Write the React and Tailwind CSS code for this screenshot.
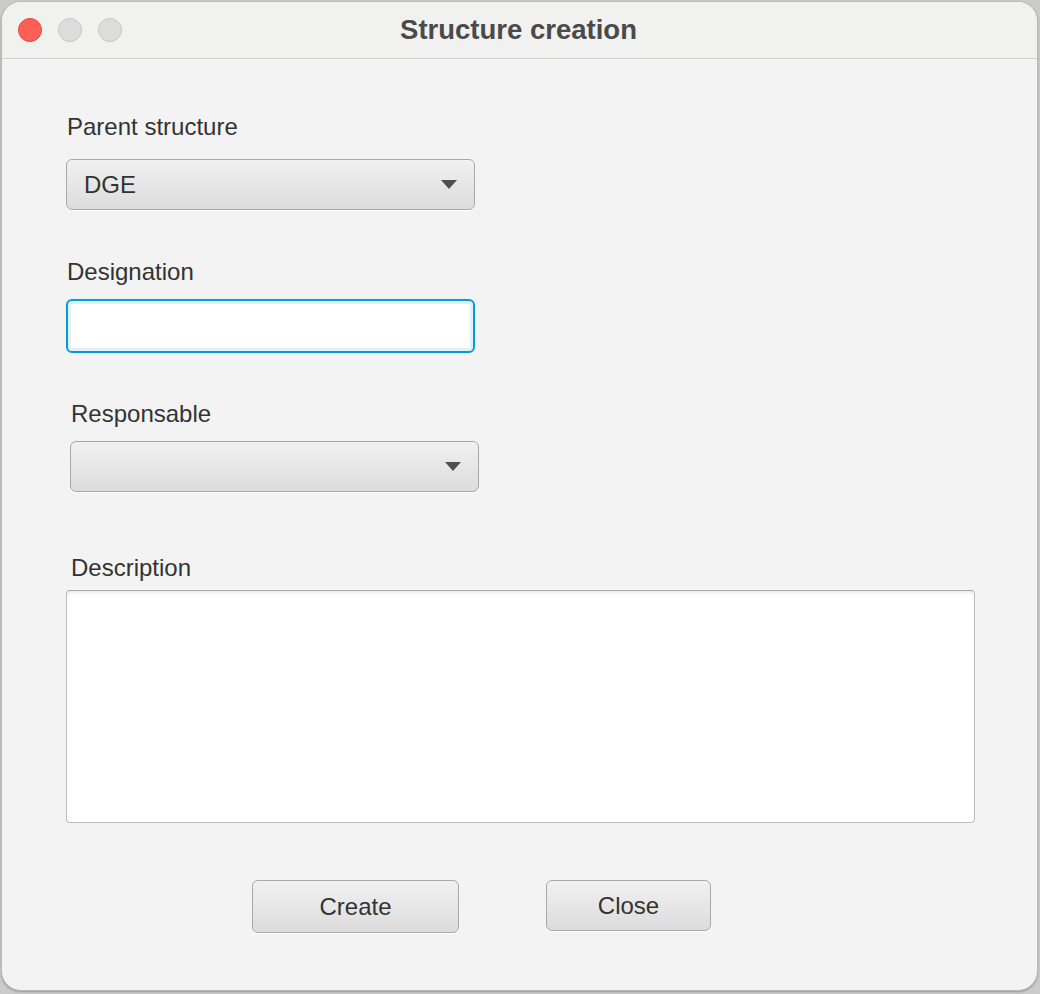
import React from "react";

function Arrow() {
  return (
    <svg width="16" height="9" viewBox="0 0 16 9" className="block">
      <path d="M0 0 L16 0 L8 9 Z" fill="#505050" />
    </svg>
  );
}

function Combo({ value, className }) {
  return (
    <div
      className={
        "flex items-center justify-between h-[51px] w-[409px] rounded-[6px] border border-[#a9a9a9] bg-gradient-to-b from-[#f1f1f1] to-[#dcdcdc] shadow-[0_1px_0_#ffffff] pl-[17px] pr-[17px] " +
        (className || "")
      }
    >
      <span className="text-[24px] text-[#333333]">{value}</span>
      <Arrow />
    </div>
  );
}

function Label({ children, className }) {
  return (
    <div className={"h-[28px] leading-[28px] text-[24px] text-[#333333] " + (className || "")}>
      {children}
    </div>
  );
}

export default function App() {
  return (
    <div
      className="w-[1040px] h-[994px] bg-[#cbcbcb] pt-[1px] pl-[1px]"
      style={{ fontFamily: '"Liberation Sans", Arial, sans-serif' }}
    >
      <div className="w-[1037px] h-[990px] rounded-[20px] overflow-hidden bg-[#f3f3f3] border border-[#b9b9b9] shadow-[0_1px_2px_rgba(0,0,0,0.25)] flex flex-col">
        {/* Title bar */}
        <div className="relative h-[57px] shrink-0 bg-[#f1f1f0] border-b border-[#d2d2d2] flex items-center justify-center">
          <div className="absolute left-[16px] top-[16px] flex gap-[16px]">
            <div className="w-[24px] h-[24px] rounded-full bg-[#fe5f57] border border-[#e2463f]" />
            <div className="w-[24px] h-[24px] rounded-full bg-[#dcdcdc] border border-[#c6c6c6]" />
            <div className="w-[24px] h-[24px] rounded-full bg-[#dcdcdc] border border-[#c6c6c6]" />
          </div>
          <div className="text-[27.5px] font-bold text-[#4a4a4a] ml-[-2px] mt-[-1px]">Structure creation</div>
        </div>

        {/* Content */}
        <div className="flex flex-col pt-[54px]">
          <Label className="ml-[65px]">Parent structure</Label>
          <Combo value="DGE" className="ml-[64px] mt-[18px]" />

          <Label className="ml-[65px] mt-[48px]">Designation</Label>
          <div className="ml-[64px] mt-[13px] w-[409px] h-[54px] rounded-[6px] border-2 border-[#0a9ad6] bg-white shadow-[inset_0_0_0_3px_#dff0f8,0_0_0_1px_#e4f2f9]" />

          <Label className="ml-[69px] mt-[47px]">Responsable</Label>
          <Combo value="" className="ml-[68px] mt-[13px]" />

          <Label className="ml-[69px] mt-[62px]">Description</Label>
          <div className="ml-[64px] mt-[8px] w-[909px] h-[233px] rounded-[4px] border border-[#bdbdbd] border-t-[#a9a9a9] bg-white shadow-[inset_0_3px_4px_-2px_rgba(0,0,0,0.12)]" />

          <div className="flex items-start mt-[57px] ml-[250px] gap-[87px]">
            <div className="w-[207px] h-[53px] rounded-[6px] border border-[#a9a9a9] bg-gradient-to-b from-[#f1f1f1] to-[#dcdcdc] shadow-[0_1px_0_#ffffff] flex items-center justify-center text-[24px] text-[#333333]">
              Create
            </div>
            <div className="w-[165px] h-[51px] rounded-[6px] border border-[#a9a9a9] bg-gradient-to-b from-[#f1f1f1] to-[#dcdcdc] shadow-[0_1px_0_#ffffff] flex items-center justify-center text-[24px] text-[#333333]">
              Close
            </div>
          </div>
        </div>
      </div>
    </div>
  );
}
